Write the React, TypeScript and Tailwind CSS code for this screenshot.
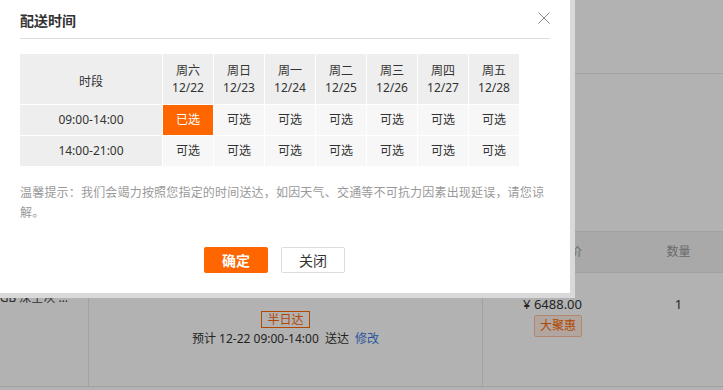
const days: [string, string][] = [
  ["周六", "12/22"],
  ["周日", "12/23"],
  ["周一", "12/24"],
  ["周二", "12/25"],
  ["周三", "12/26"],
  ["周四", "12/27"],
  ["周五", "12/28"],
];

const slots = ["09:00-14:00", "14:00-21:00"];

export default function App() {
  return (
    <div className="relative w-[723px] h-[390px] overflow-hidden bg-white font-['Noto_Sans','Noto_Sans_CJK_SC',sans-serif] text-[12px] text-[#333]">
      {/* underlying page */}
      <div className="h-[74px] border-b border-[#e8e8e8]" />
      <div className="mt-[157px] h-[42px] flex border-y border-[#e8e8e8] bg-[#f3f3f3] text-[#999]">
        <div className="w-[89px] shrink-0" />
        <div className="w-[394px] shrink-0" />
        <div className="w-[151px] shrink-0 flex items-center justify-end pr-[52px]">单价</div>
        <div className="flex-1 flex items-center justify-center">数量</div>
      </div>
      <div className="h-[114px] flex border-b border-[#e8e8e8]">
        <div className="w-[89px] shrink-0 border-r border-[#e8e8e8] flex justify-end pr-[20px] pt-[16px] leading-[18px] whitespace-nowrap overflow-hidden text-[#444]">
          <span className="shrink-0">Apple iPhone XS Max (A2103) 256GB 深空灰 …</span>
        </div>
        <div className="w-[394px] shrink-0 border-r border-[#e8e8e8] flex flex-col items-center pt-[38px]">
          <span className="border border-[#ff6600] text-[#ff6600] px-[5px] leading-[15px]">半日达</span>
          <div className="mt-[2px] leading-[18px] whitespace-nowrap">
            预计 12-22 09:00-14:00<span className="ml-[3px]"> 送达</span>
            <span className="ml-[3px] text-[#3b7ddd]"> 修改</span>
          </div>
        </div>
        <div className="w-[151px] shrink-0 flex flex-col items-end pr-[52px] pt-[22px]">
          <span className="text-[13px] leading-[18px] whitespace-nowrap">¥ 6488.00</span>
          <span className="mt-[2px] border border-[#ffc29e] bg-[#fff0e6] text-[#ff6600] px-[5px] leading-[20px] rounded-[2px]">
            大聚惠
          </span>
        </div>
        <div className="flex-1 flex justify-center pt-[22px] text-[13px] leading-[18px]">1</div>
      </div>

      {/* mask */}
      <div className="absolute inset-0 bg-black/30" />

      {/* dialog */}
      <div className="absolute left-0 top-0 w-[575px] h-[298px] bg-white border-r-[5px] border-b-[5px] border-[#d9d9d9] px-[20px]">
        <div className="h-[39px] flex justify-between items-start border-b border-[#dddddd] pt-[11px]">
          <h2 className="text-[14px] font-bold leading-[20px] text-[#333]">配送时间</h2>
          <svg className="mt-[1px]" width="12" height="12" viewBox="0 0 12 12">
            <path d="M0.5 0.5 L11.5 11.5 M11.5 0.5 L0.5 11.5" stroke="#888" strokeWidth="1" fill="none" />
          </svg>
        </div>

        <div className="mt-[15px] grid grid-cols-[142px_repeat(7,50px)] grid-rows-[50px_30px_30px] gap-px w-max">
          <div className="bg-[#eeeeee] flex items-center justify-center pt-[6px]">时段</div>
          {days.map(([d, date]) => (
            <div key={date} className="bg-[#eeeeee] flex flex-col items-center justify-center leading-[17px]">
              <span>{d}</span>
              <span>{date}</span>
            </div>
          ))}
          {slots.map((s, ri) => (
            <>
              <div key={s} className="bg-[#eeeeee] flex items-center justify-center">
                {s}
              </div>
              {days.map(([, date], ci) =>
                ri === 0 && ci === 0 ? (
                  <div key={s + date} className="bg-[#ff6600] text-white flex items-center justify-center">
                    已选
                  </div>
                ) : (
                  <div key={s + date} className="bg-[#f7f7f7] flex items-center justify-center">
                    可选
                  </div>
                )
              )}
            </>
          ))}
        </div>

        <p className="mt-[17px] w-[530px] leading-[20px] text-[#999] tracking-[0.19px]">
          温馨提示：我们会竭力按照您指定的时间送达，如因天气、交通等不可抗力因素出现延误，请您谅解。
        </p>

        <div className="mt-[24px] flex gap-[13px] pl-[184px]">
          <button className="w-[64px] h-[26px] rounded-[2px] bg-[#ff6600] text-white text-[14px] font-bold flex items-center justify-center">
            确定
          </button>
          <button className="w-[64px] h-[26px] rounded-[2px] bg-white border border-[#dcdcdc] text-[#333] text-[14px] flex items-center justify-center">
            关闭
          </button>
        </div>
      </div>
    </div>
  );
}
